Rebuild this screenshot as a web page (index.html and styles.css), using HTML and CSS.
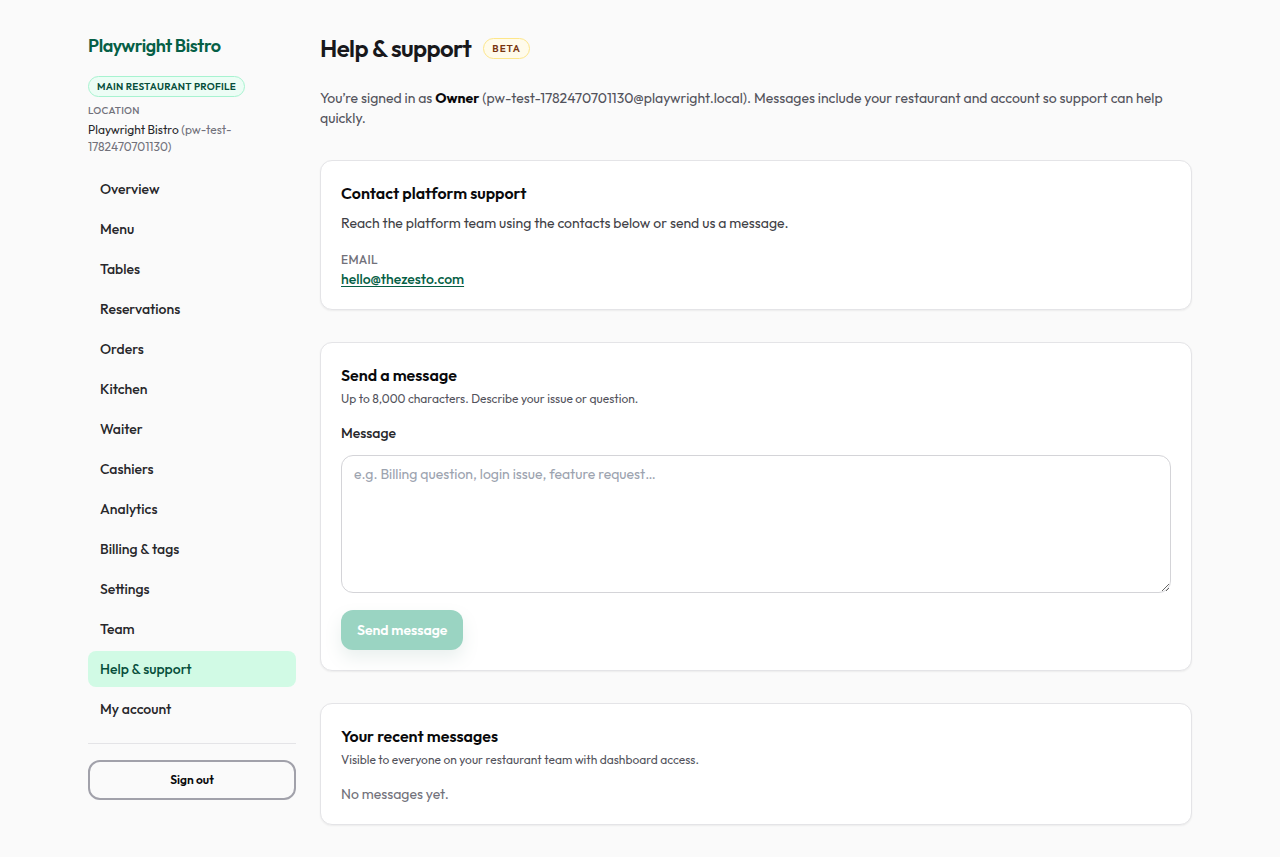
FILE: index.html
```html
<!DOCTYPE html>
<html lang="en">
<head>
    <meta charset="UTF-8">
    <meta name="viewport" content="width=device-width, initial-scale=1.0">
    <title>Help &amp; support</title>
    <link rel="stylesheet" href="styles.css">
</head>
<body>
    <div class="layout">
        <aside class="sidebar">
            <a class="brand" href="#">Playwright Bistro</a>
            <span class="badge badge-profile">Main restaurant profile</span>
            <div class="location-label">Location</div>
            <div class="location-name">Playwright Bistro <span class="slug">(pw-test-1782470701130)</span></div>
            <nav class="nav">
                <a href="#">Overview</a>
                <a href="#">Menu</a>
                <a href="#">Tables</a>
                <a href="#">Reservations</a>
                <a href="#">Orders</a>
                <a href="#">Kitchen</a>
                <a href="#">Waiter</a>
                <a href="#">Cashiers</a>
                <a href="#">Analytics</a>
                <a href="#">Billing &amp; tags</a>
                <a href="#">Settings</a>
                <a href="#">Team</a>
                <a href="#" class="active" aria-current="page">Help &amp; support</a>
                <a href="#">My account</a>
            </nav>
            <div class="sidebar-footer">
                <button type="button" class="sign-out">Sign out</button>
            </div>
        </aside>

        <main class="main">
            <header>
                <div class="page-title">
                    <h1>Help &amp; support</h1>
                    <span class="badge badge-beta">Beta</span>
                </div>
                <p class="intro">You’re signed in as <strong>Owner</strong> (pw-test-1782470701130@playwright.local). Messages include your restaurant and account so support can help quickly.</p>
            </header>

            <section class="card">
                <h2>Contact platform support</h2>
                <p class="card-text">Reach the platform team using the contacts below or send us a message.</p>
                <div class="contact-label">Email</div>
                <a class="contact-link" href="mailto:hello@thezesto.com">hello@thezesto.com</a>
            </section>

            <section class="card">
                <h2>Send a message</h2>
                <p class="card-hint">Up to 8,000 characters. Describe your issue or question.</p>
                <form class="message-form">
                    <label for="message">Message</label>
                    <textarea id="message" maxlength="8000" placeholder="e.g. Billing question, login issue, feature request…"></textarea>
                    <button type="submit" class="send" disabled>Send message</button>
                </form>
            </section>

            <section class="card">
                <h2>Your recent messages</h2>
                <p class="card-hint">Visible to everyone on your restaurant team with dashboard access.</p>
                <p class="empty">No messages yet.</p>
            </section>
        </main>
    </div>
</body>
</html>
```

FILE: styles.css
```css
* {
    box-sizing: border-box;
}
body {
    margin: 0;
    font-family: Outfit, Lato, sans-serif;
    font-size: 14px;
    line-height: 20px;
    color: #18181b;
    background-color: #fafafa;
}
h1, h2, p {
    margin: 0;
}
.layout {
    display: flex;
    align-items: flex-start;
    gap: 24px;
    max-width: 1152px;
    margin: 0 auto;
    padding: 32px 24px;
}

/* sidebar */
.sidebar {
    flex: 0 0 208px;
}
.brand {
    display: block;
    margin-bottom: 16px;
    font-size: 18px;
    line-height: 28px;
    font-weight: 600;
    letter-spacing: -0.025em;
    color: #065f46;
    text-decoration: none;
}
.badge {
    display: inline-block;
    padding: 2px 8px;
    border: 1px solid;
    border-radius: 999px;
    font-size: 10px;
    line-height: 15px;
    font-weight: 600;
    letter-spacing: 0.025em;
    text-transform: uppercase;
    white-space: nowrap;
}
.badge-profile {
    display: block;
    width: fit-content;
    color: #064e3b;
    background-color: #ecfdf5;
    border-color: #a7f3d0;
}
.location-label {
    margin: 6px 0 3px;
    font-size: 10px;
    line-height: 15px;
    font-weight: 500;
    letter-spacing: 0.025em;
    text-transform: uppercase;
    color: #71717a;
}
.location-name {
    font-size: 12px;
    line-height: 17px;
    color: #27272a;
}
.slug {
    color: #71717a;
}
.nav {
    display: flex;
    flex-direction: column;
    gap: 4px;
    margin-top: 16px;
}
.nav a {
    padding: 8px 12px;
    border-radius: 8px;
    font-weight: 500;
    color: #27272a;
    text-decoration: none;
}
.nav a:hover {
    background-color: #f4f4f5;
}
.nav .active,
.nav .active:hover {
    color: #064e3b;
    background-color: #d1fae5;
}
.sidebar-footer {
    margin-top: 16px;
    padding-top: 16px;
    border-top: 1px solid #e4e4e7;
}
button {
    font-family: inherit;
    height: 40px;
    border-radius: 12px;
    cursor: pointer;
}
.sign-out {
    width: 100%;
    border: 2px solid #a1a1aa;
    font-size: 12px;
    line-height: 16px;
    font-weight: 600;
    color: #09090b;
    background-color: #fafafa;
}

/* main column */
.main {
    flex: 1;
    min-width: 0;
    display: flex;
    flex-direction: column;
    gap: 32px;
}
.page-title {
    display: flex;
    align-items: center;
    gap: 12px;
    margin-bottom: 24px;
}
h1 {
    font-size: 24px;
    line-height: 32px;
    font-weight: 600;
    letter-spacing: -0.025em;
}
.badge-beta {
    letter-spacing: 0.1em;
    color: #78350f;
    background-color: #fffbeb;
    border-color: #fde68a;
}
.intro {
    color: #52525b;
}
.intro strong {
    font-weight: 700;
    color: #09090b;
}
.card {
    padding: 20px;
    border: 1px solid #e4e4e7;
    border-radius: 12px;
    background-color: #fff;
    box-shadow: 0 1px 2px rgba(0, 0, 0, 0.06);
}
h2 {
    font-size: 16px;
    line-height: 24px;
    font-weight: 600;
    color: #09090b;
}
.card-text {
    margin-top: 8px;
    color: #3f3f46;
}
.card-hint {
    margin-top: 4px;
    font-size: 12px;
    line-height: 16px;
    color: #52525b;
}
.contact-label {
    margin: 19px 0 1px;
    font-size: 12px;
    line-height: 16px;
    font-weight: 500;
    letter-spacing: 0.025em;
    text-transform: uppercase;
    color: #71717a;
}
.contact-link {
    display: block;
    width: fit-content;
    font-weight: 500;
    color: #065f46;
    text-underline-offset: 2px;
}
.message-form {
    display: flex;
    flex-direction: column;
    align-items: flex-start;
    margin-top: 16px;
}
.message-form label {
    margin-bottom: 12px;
    font-weight: 500;
    color: #27272a;
}
textarea {
    width: 100%;
    height: 138px;
    padding: 8px 12px;
    border: 1px solid #d4d4d8;
    border-radius: 12px;
    font: inherit;
    color: #18181b;
    background-color: #fff;
    resize: vertical;
}
textarea::placeholder {
    color: #9ca3af;
}
.send {
    margin-top: 17px;
    padding: 0 16px;
    border: 0;
    font-size: 14px;
    font-weight: 600;
    color: #fff;
    background-color: #059669;
    box-shadow: 0 8px 16px rgba(6, 78, 59, 0.2);
}
.send:disabled {
    opacity: 0.4;
    cursor: default;
}
.empty {
    margin-top: 16px;
    color: #71717a;
}
```
